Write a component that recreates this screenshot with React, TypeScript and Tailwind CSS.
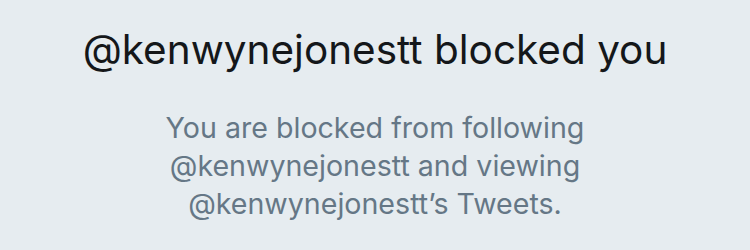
function App() {
    return (
        <div className="w-[750px] h-[250px] bg-[#e6ecf0] flex flex-col items-center font-['Inter',sans-serif] overflow-hidden">
            <h1 className="mt-[26px] text-[40.5px] leading-[48px] text-[#14171a]">
                @kenwynejonestt blocked you
            </h1>
            <p className="mt-[35px] w-[480px] text-center text-[28.6px] leading-[38px] text-[#657786]">
                You are blocked from following @kenwynejonestt and viewing @kenwynejonestt’s Tweets.
            </p>
        </div>
    );
}

export default App;
